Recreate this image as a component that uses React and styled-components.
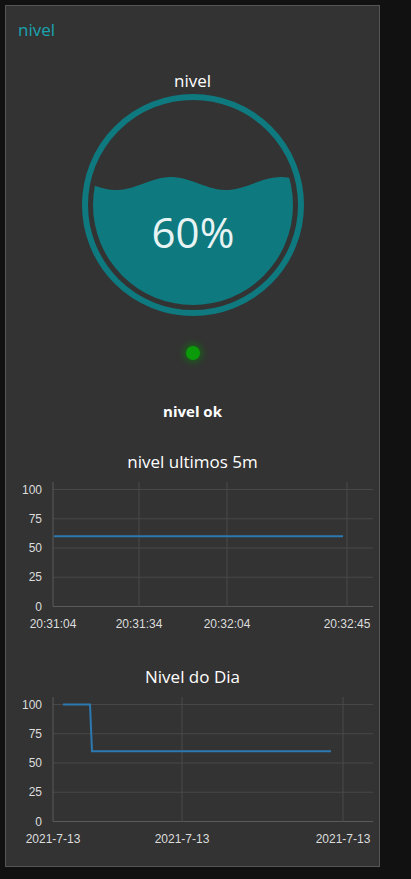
import styled, { createGlobalStyle } from "styled-components";

const GlobalStyle = createGlobalStyle`
  html, body {
    margin: 0;
    background-color: #111111;
  }
  body {
    padding: 5px;
    font-family: "Open Sans", "Noto Sans", sans-serif;
  }
`;

const Card = styled.div`
  width: 375px;
  box-sizing: border-box;
  background-color: #333333;
  border: 1px solid #555555;
  display: flex;
  flex-direction: column;
  align-items: stretch;
  padding-bottom: 15px;
`;

const Header = styled.div`
  margin: 12px 0 0 12px;
  height: 24px;
  line-height: 24px;
  font-size: 17px;
  color: #1aa3b0;
`;

const Label = styled.div`
  margin-top: ${(p) => p.$top}px;
  height: 24px;
  line-height: 24px;
  text-align: center;
  color: #ffffff;
  font-size: ${(p) => p.$size || 17}px;
  font-weight: ${(p) => (p.$bold ? 700 : 400)};
`;

const GaugeWrap = styled.div`
  display: flex;
  justify-content: center;
`;

const LedRow = styled.div`
  margin-top: 24px;
  height: 24px;
  display: flex;
  align-items: center;
  justify-content: center;
`;

const Led = styled.div`
  width: 14px;
  height: 14px;
  border-radius: 50%;
  background-color: #0a9a0a;
  box-shadow: 0 0 6px 3px rgba(0, 140, 0, 0.45);
`;

const StatusText = styled.div`
  margin-top: 35px;
  height: 22px;
  line-height: 22px;
  text-align: center;
  color: #ffffff;
  font-size: 15px;
  font-weight: 700;
`;

const ChartSvg = styled.svg`
  display: block;
  width: 373px;
  height: 162px;
  font-family: "Liberation Sans", Arial, sans-serif;
  font-size: 12px;
`;

const teal = "#0e7a7f";

// wave edge for the gauge fill
const wavePath = (() => {
  const pts = [];
  for (let x = 0; x <= 224; x += 4) {
    const y = 90.5 - 6.5 * Math.cos((2 * Math.PI * (x - 90)) / 110);
    pts.push(`${x},${y.toFixed(2)}`);
  }
  return "M0,224 L" + pts.join(" L") + " L224,224 Z";
})();

const Gauge = ({ value }) => (
  <svg width="224" height="224" viewBox="0 0 224 224">
    <defs>
      <clipPath id="inner">
        <circle cx="112" cy="112" r="100" />
      </clipPath>
    </defs>
    <circle cx="112" cy="112" r="108" fill="none" stroke={teal} strokeWidth="6" />
    <path d={wavePath} fill={teal} clipPath="url(#inner)" />
    <text
      x="112"
      y="155"
      textAnchor="middle"
      fill="#e8f4f4"
      fontSize="42"
      fontFamily="'Open Sans', sans-serif"
    >
      {value}%
    </text>
  </svg>
);

const yTicks = [100, 75, 50, 25, 0];
const TOP = 15.5;
const BOTTOM = 132.5;
const yPos = (v) => BOTTOM - ((BOTTOM - TOP) * v) / 100;

const Chart = ({ xTicks, points }) => (
  <ChartSvg viewBox="0 0 373 162">
    {yTicks.map((v) => (
      <g key={v}>
        <line x1="47" x2="367" y1={yPos(v)} y2={yPos(v)} stroke={v === 0 ? "#5a5a5a" : "#484848"} strokeWidth="1" />
        <text x="36" y={yPos(v) + 4} textAnchor="end" fill="#dddddd">
          {v}
        </text>
      </g>
    ))}
    {xTicks.map((t, i) => (
      <g key={i}>
        <line x1={t.x} x2={t.x} y1="8" y2={BOTTOM} stroke={i === 0 ? "#5a5a5a" : "#4a4a4a"} strokeWidth="1" />
        <text x={t.x} y="154" textAnchor="middle" fill="#dddddd">
          {t.label}
        </text>
      </g>
    ))}
    <polyline
      points={points.map(([x, v]) => `${x},${yPos(v)}`).join(" ")}
      fill="none"
      stroke="#2c78b0"
      strokeWidth="2"
    />
  </ChartSvg>
);

const App = () => (
  <>
    <GlobalStyle />
    <Card>
      <Header>nivel</Header>
      <Label $top={27}>nivel</Label>
      <GaugeWrap>
        <Gauge value={60} />
      </GaugeWrap>
      <LedRow>
        <Led />
      </LedRow>
      <StatusText>nivel ok</StatusText>
      <Label $top={28}>nivel ultimos 5m</Label>
      <Chart
        xTicks={[
          { x: 47, label: "20:31:04" },
          { x: 133, label: "20:31:34" },
          { x: 221, label: "20:32:04" },
          { x: 341, label: "20:32:45" },
        ]}
        points={[
          [48, 60],
          [337, 60],
        ]}
      />
      <Label $top={29}>Nivel do Dia</Label>
      <Chart
        xTicks={[
          { x: 47, label: "2021-7-13" },
          { x: 176, label: "2021-7-13" },
          { x: 337, label: "2021-7-13" },
        ]}
        points={[
          [57, 100],
          [84, 100],
          [86, 60],
          [325, 60],
        ]}
      />
    </Card>
  </>
);

export default App;
